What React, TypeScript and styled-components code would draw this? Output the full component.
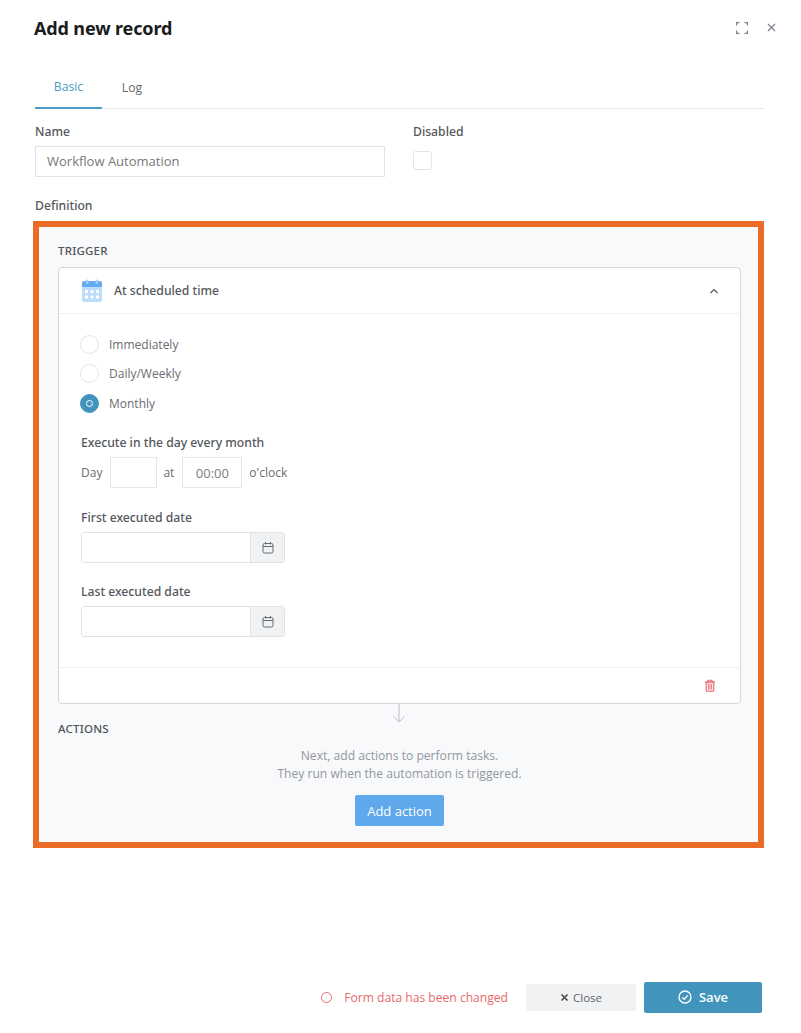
import React from "react";
import styled, { createGlobalStyle } from "styled-components";

const Global = createGlobalStyle`
  html, body { margin: 0; padding: 0; background: #fff; }
  body { font-family: "Open Sans", "Noto Sans", sans-serif; font-size: 13px; color: #444; }
  * { box-sizing: border-box; }
`;

const Page = styled.div`
  width: 801px;
  height: 1033px;
  display: flex;
  flex-direction: column;
  padding: 0 37px 20px 33px;
  overflow: hidden;
`;
const Header = styled.header`
  display: flex;
  align-items: center;
  justify-content: space-between;
  height: 56px;
  padding: 0 0 1px 1px;
`;
const Title = styled.h1`
  margin: 0;
  font-size: 18px;
  font-weight: 700;
  color: #1a1c20;
  font-family: "Noto Sans", sans-serif;
  letter-spacing: -0.13px;
`;
const HeaderIcons = styled.div`
  display: flex;
  align-items: center;
  gap: 19px;
  margin-right: -12px;
  color: #7d838d;
`;
const Tabs = styled.nav`
  display: flex;
  margin: 15px 0 0 2px;
  height: 38px;
  border-bottom: 1px solid #e4e6e9;
`;
const Tab = styled.div<{ $active?: boolean }>`
  width: ${p => (p.$active ? "67px" : "60px")};
  height: 38px;
  display: flex;
  align-items: center;
  justify-content: center;
  padding-bottom: 5px;
  font-size: 12.2px;
  color: ${p => (p.$active ? "#4a9cc4" : "#666")};
  border-bottom: ${p => (p.$active ? "2px solid #4a9cc4" : "none")};
`;
const NameRow = styled.div`
  display: flex;
  margin: 14px 0 0 2px;
`;
const NameField = styled.div`
  width: 378px;
`;
const Label = styled.div`
  font-family: "Noto Sans", sans-serif;
  font-size: 12.2px;
  font-weight: 500;
  line-height: 18px;
  color: #54575c;
`;
const NameInput = styled.div`
  width: 350px;
  height: 31px;
  margin-top: 5px;
  padding: 0 0 2px 11px;
  display: flex;
  align-items: center;
  border: 1px solid #e1e4e8;
  font-size: 13px;
  color: #777;
`;
const CheckBox = styled.div`
  width: 19px;
  height: 19px;
  margin-top: 10px;
  border: 1px solid #e2e4e8;
  border-radius: 3px;
  background: #fff;
`;
const DefinitionLabel = styled(Label)`
  margin: 20px 0 6px 2px;
`;
const Definition = styled.section`
  width: 731px;
  height: 627px;
  border: 6px solid #ea6c26;
  background: #f8f9fb;
  padding: 15px 17px 0 19px;
  display: flex;
  flex-direction: column;
`;
const SectionTitle = styled.div`
  font-family: "Noto Sans", sans-serif;
  font-size: 11.5px;
  font-weight: 500;
  line-height: 18px;
  color: #505358;
  letter-spacing: 0.2px;
`;
const Card = styled.div`
  margin-top: 7px;
  height: 437px;
  flex: none;
  background: #fff;
  border: 1px solid #d4d7dc;
  border-radius: 4px;
  display: flex;
  flex-direction: column;
`;
const CardHead = styled.div`
  height: 46px;
  flex: none;
  display: flex;
  align-items: center;
  padding: 0 21px 0 22px;
  border-bottom: 1px solid #eff0f2;
`;
const CardTitle = styled.div`
  flex: 1;
  margin-left: 11px;
  font-family: "Noto Sans", sans-serif;
  font-size: 12.2px;
  font-weight: 500;
  color: #54575c;
`;
const CardBody = styled.div`
  flex: 1;
  padding: 20px 0 0 22px;
`;
const RadioRow = styled.div`
  display: flex;
  align-items: center;
  height: 20px;
  margin-bottom: 9.5px;
  margin-left: -1px;
  gap: 10px;
  font-size: 12px;
  color: #6a6d72;
`;
const Radio = styled.span<{ $on?: boolean }>`
  width: 19px;
  height: 19px;
  border-radius: 50%;
  display: flex;
  align-items: center;
  justify-content: center;
  border: 1px solid ${p => (p.$on ? "#4195bd" : "#e1e4e7")};
  background: ${p => (p.$on ? "#4195bd" : "#fff")};
  &::after {
    content: "";
    display: ${p => (p.$on ? "block" : "none")};
    width: 5px;
    height: 5px;
    border-radius: 50%;
    background: #4195bd;
    border: 1.5px solid #fff;
  }
`;
const SubLabel = styled(Label)`
  margin-top: 0;
`;
const ScheduleLabel = styled(SubLabel)`
  margin-top: 21px;
`;
const TimeRow = styled.div`
  display: flex;
  align-items: center;
  margin-top: 5px;
  font-size: 12px;
  color: #6a6d72;
`;
const SmallInput = styled.div<{ $w: number; $r: number }>`
  width: ${p => p.$w}px;
  height: 31px;
  margin: 0 ${p => p.$r}px 0 8px;
  border: 1px solid #e4e6e9;
  display: flex;
  align-items: center;
  justify-content: center;
  font-size: 13px;
  color: #7b7e83;
`;
const DateGroup = styled.div`
  margin-top: 21px;
`;
const DateLater = styled.div`
  margin-top: 20px;
`;
const DateField = styled.div`
  display: flex;
  width: 204px;
  height: 31px;
  margin-top: 5px;
  border: 1px solid #dfe2e6;
  border-radius: 3px;
  overflow: hidden;
`;
const DateInput = styled.div`
  flex: 1;
  background: #fff;
`;
const DateBtn = styled.div`
  width: 34px;
  display: flex;
  align-items: center;
  justify-content: center;
  background: #f1f2f4;
  border-left: 1px solid #dfe2e6;
  color: #666a70;
`;
const CardFoot = styled.div`
  height: 36px;
  flex: none;
  display: flex;
  align-items: center;
  justify-content: flex-end;
  padding-right: 24px;
  border-top: 1px solid #eff0f2;
  color: #e8696d;
`;
const Connector = styled.div`
  display: flex;
  justify-content: center;
  height: 20px;
  margin-bottom: -4px;
  margin-left: -2px;
  color: #b9bdc3;
`;
const Empty = styled.div`
  display: flex;
  flex-direction: column;
  align-items: center;
  margin-top: 9px;
  font-size: 12.1px;
  line-height: 18px;
  color: #93979d;
  text-align: center;
`;
const AddButton = styled.div`
  margin-top: 12px;
  width: 89px;
  height: 31px;
  display: flex;
  align-items: center;
  justify-content: center;
  border-radius: 2px;
  background: #60a8ec;
  color: #fff;
  font-size: 13px;
  font-weight: 500;
`;
const Footer = styled.footer`
  margin-top: auto;
  display: flex;
  align-items: center;
  justify-content: flex-end;
  margin-right: 2px;
`;
const Status = styled.div`
  display: flex;
  align-items: center;
  gap: 12px;
  margin-right: 18px;
  font-size: 12.1px;
  color: #e8696d;
`;
const StatusDot = styled.span`
  width: 11px;
  height: 11px;
  border: 1.5px solid #e8696d;
  border-radius: 50%;
`;
const CloseButton = styled.div`
  width: 110px;
  height: 27px;
  display: flex;
  align-items: center;
  justify-content: center;
  gap: 4px;
  border-radius: 2px;
  margin-right: 8px;
  background: #f1f2f4;
  color: #5f6368;
  font-size: 11.5px;
`;
const SaveButton = styled.div`
  width: 118px;
  height: 31px;
  display: flex;
  align-items: center;
  justify-content: center;
  gap: 7px;
  padding-bottom: 1px;
  border-radius: 2px;
  background: #4195bd;
  color: #fff;
  font-size: 13px;
  font-weight: 600;
`;

const CalIcon = () => (
  <svg width="14" height="14" viewBox="0 0 14 14" fill="none" stroke="currentColor" strokeWidth="1">
    <rect x="2" y="2.5" width="10" height="9.5" rx="1.5" />
    <path d="M2 5.5h10M4.5 1v2.5M9.5 1v2.5" />
  </svg>
);

const ColorCal = () => (
  <svg width="22" height="23" viewBox="0 0 22 23">
    <path d="M3 2h16a2 2 0 0 1 2 2v5H1V4a2 2 0 0 1 2-2z" fill="#63aaf1" />
    <path d="M1 8h20v13a2 2 0 0 1-2 2H3a2 2 0 0 1-2-2z" fill="#bcdcfb" />
    <rect x="5" y="0.5" width="2.4" height="4.5" rx="1" fill="#a9d0f7" />
    <rect x="14.6" y="0.5" width="2.4" height="4.5" rx="1" fill="#a9d0f7" />
    {[4, 9.5, 15].map(x => [11, 16.5].map(y => (
      <rect key={`${x}-${y}`} x={x} y={y} width="3" height="3" fill="#fff" />
    )))}
  </svg>
);

export default function App() {
  return (
    <Page>
      <Global />
      <Header>
        <Title>Add new record</Title>
        <HeaderIcons>
          <svg width="12" height="12" viewBox="0 0 12 12" fill="none" stroke="currentColor" strokeWidth="1.2">
            <path d="M.6 3.5V.6h2.9M8.5.6h2.9v2.9M11.4 8.5v2.9H8.5M3.5 11.4H.6V8.5" />
          </svg>
          <svg width="9" height="9" viewBox="0 0 9 9" fill="none" stroke="currentColor" strokeWidth="1.3">
            <path d="M1 1l7 7M8 1L1 8" />
          </svg>
        </HeaderIcons>
      </Header>
      <Tabs>
        <Tab $active>Basic</Tab>
        <Tab>Log</Tab>
      </Tabs>
      <NameRow>
        <NameField>
          <Label>Name</Label>
          <NameInput>Workflow Automation</NameInput>
        </NameField>
        <div>
          <Label>Disabled</Label>
          <CheckBox />
        </div>
      </NameRow>
      <DefinitionLabel>Definition</DefinitionLabel>
      <Definition>
        <SectionTitle>TRIGGER</SectionTitle>
        <Card>
          <CardHead>
            <ColorCal />
            <CardTitle>At scheduled time</CardTitle>
            <svg width="10" height="6" viewBox="0 0 10 6" fill="none" stroke="#555" strokeWidth="1.2">
              <path d="M1.5 5L5 1.5 8.5 5" />
            </svg>
          </CardHead>
          <CardBody>
            <RadioRow><Radio />Immediately</RadioRow>
            <RadioRow><Radio />Daily/Weekly</RadioRow>
            <RadioRow><Radio $on />Monthly</RadioRow>
            <ScheduleLabel>Execute in the day every month</ScheduleLabel>
            <TimeRow>
              Day
              <SmallInput $w={47} $r={6} />
              at
              <SmallInput $w={60} $r={7}>00:00</SmallInput>
              o'clock
            </TimeRow>
            <DateGroup>
              <SubLabel>First executed date</SubLabel>
              <DateField><DateInput /><DateBtn><CalIcon /></DateBtn></DateField>
            </DateGroup>
            <DateLater>
              <SubLabel>Last executed date</SubLabel>
              <DateField><DateInput /><DateBtn><CalIcon /></DateBtn></DateField>
            </DateLater>
          </CardBody>
          <CardFoot>
            <svg width="12" height="13" viewBox="0 0 12 13" fill="#fbe3e4" stroke="currentColor" strokeWidth="1.1">
              <path d="M2.2 3v8.3a1 1 0 0 0 1 1h5.6a1 1 0 0 0 1-1V3z" />
              <path d="M1 3h10M4 3V1.2h4V3M4.8 5v5.5M7.2 5v5.5" fill="none" />
            </svg>
          </CardFoot>
        </Card>
        <Connector>
          <svg width="14" height="20" viewBox="0 0 14 20" fill="none" stroke="currentColor" strokeWidth="1">
            <path d="M7 0v18M1.5 12.5L7 18l5.5-5.5" />
          </svg>
        </Connector>
        <SectionTitle>ACTIONS</SectionTitle>
        <Empty>
          <div>Next, add actions to perform tasks.</div>
          <div>They run when the automation is triggered.</div>
          <AddButton>Add action</AddButton>
        </Empty>
      </Definition>
      <Footer>
        <Status><StatusDot />Form data has been changed</Status>
        <CloseButton>
          <svg width="9" height="9" viewBox="0 0 9 9" fill="none" stroke="#444" strokeWidth="1.5">
            <path d="M1.5 1.5l6 6M7.5 1.5l-6 6" />
          </svg>
          Close
        </CloseButton>
        <SaveButton>
          <svg width="14" height="14" viewBox="0 0 14 14" fill="none" stroke="#fff" strokeWidth="1.3">
            <circle cx="7" cy="7" r="6" />
            <path d="M4.2 7.2l2 2 3.6-3.8" />
          </svg>
          Save
        </SaveButton>
      </Footer>
    </Page>
  );
}
